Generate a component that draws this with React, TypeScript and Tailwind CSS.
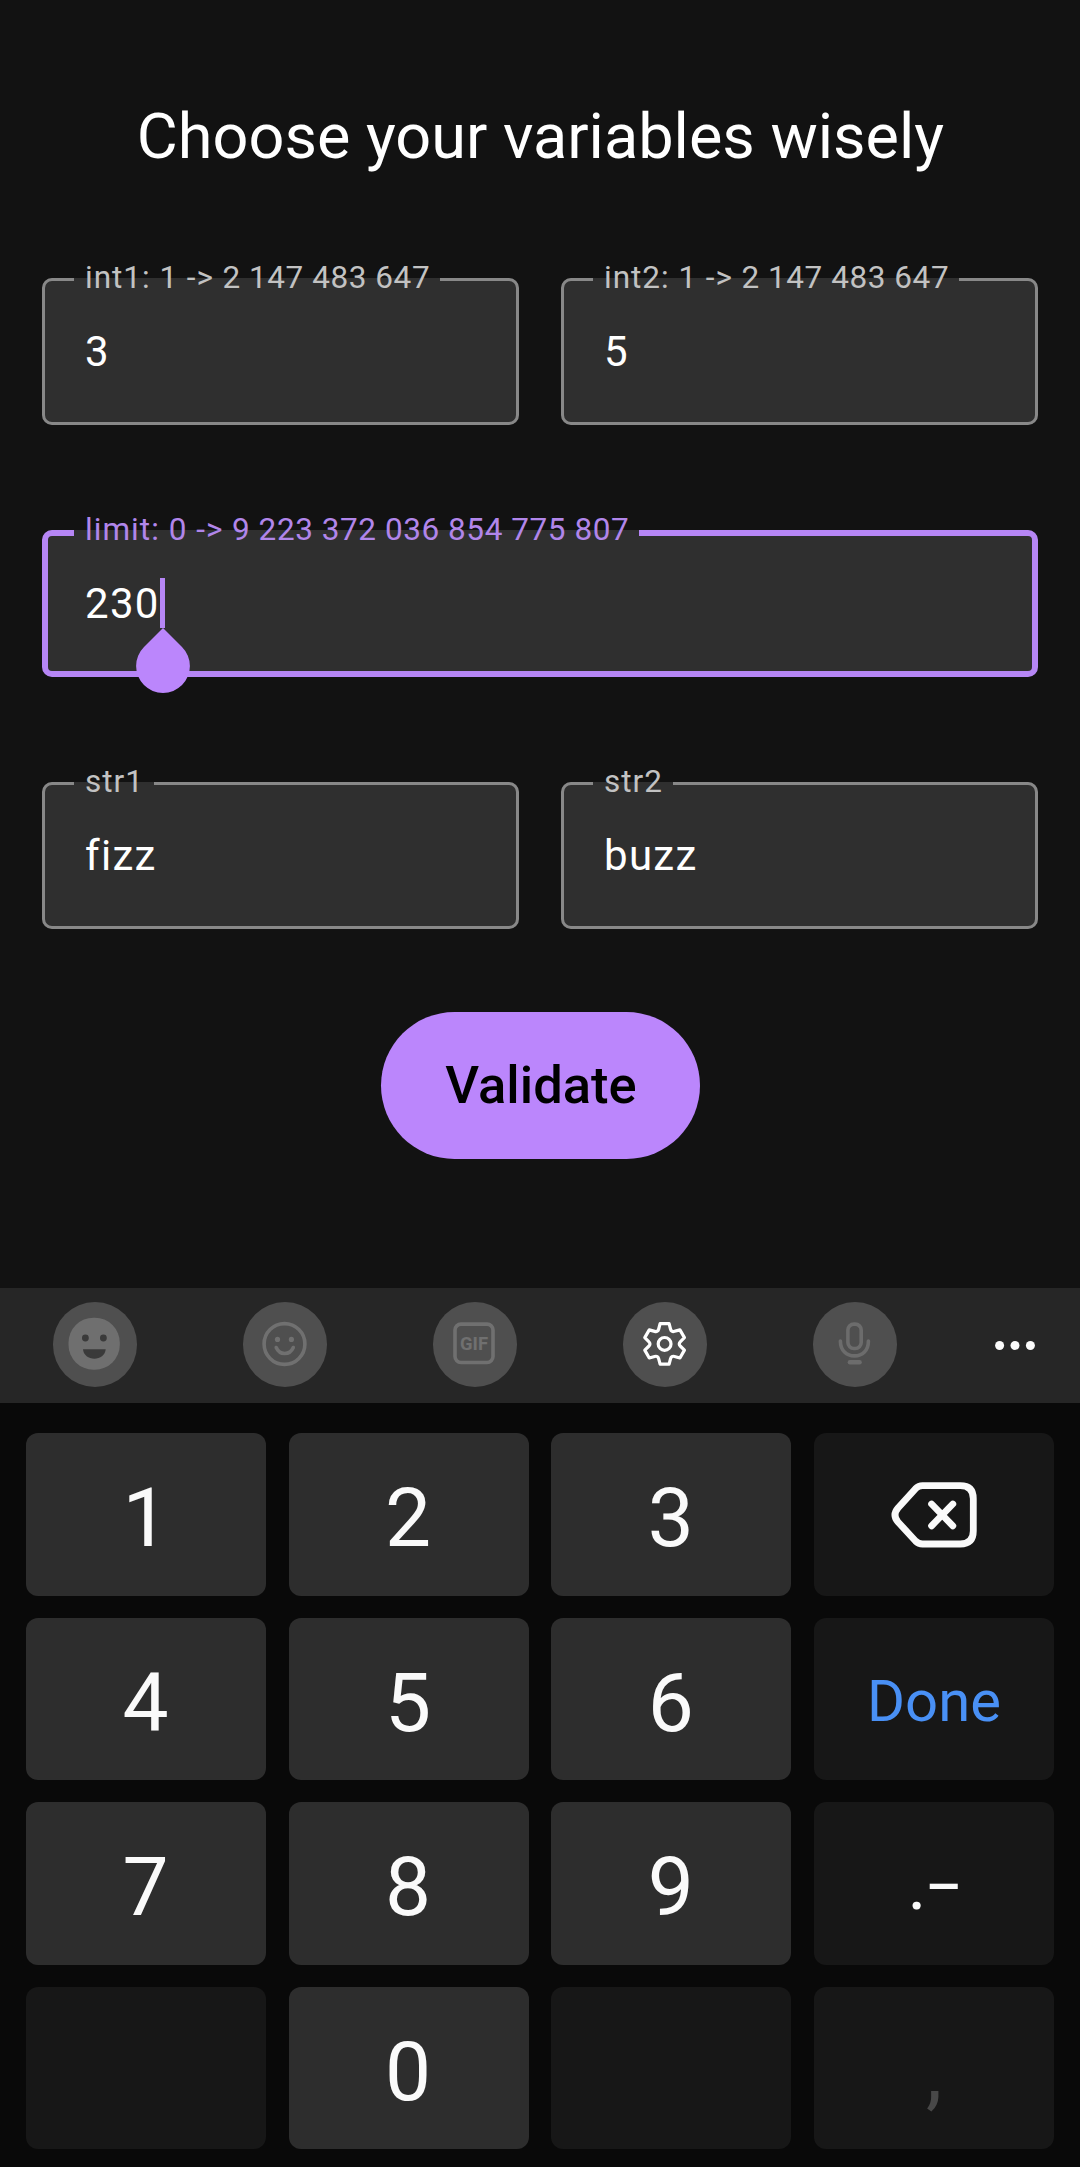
import type { ReactNode } from "react";

function Label({ name, max }: { name: string; max?: string }) {
  return (
    <>
      {name}
      {max && <span className="tracking-[0.56px]">{` ${max}`}</span>}
    </>
  );
}

function Field({ name, max, value }: { name: string; max?: string; value: string }) {
  return (
    <fieldset className="h-[147px] min-w-0 flex-1 rounded-[10px] border-[3px] border-[#888888] bg-[#2f2f2f]">
      <legend className="ml-[29px] h-0 pr-[10px] pl-[11px] text-[31.5px] leading-[0] tracking-[0.98px] whitespace-nowrap text-[#c2c2c2]">
        <span className="relative -top-[2px]">
          <Label name={name} max={max} />
        </span>
      </legend>
      <div className="flex h-full items-center pl-[40px] text-[42px] tracking-[1.3px] text-white">{value}</div>
    </fieldset>
  );
}

function FocusedField({ name, max, value }: { name: string; max?: string; value: string }) {
  return (
    <fieldset className="relative h-[147px] min-w-0 flex-1 rounded-[10px] border-[6px] border-[#b686f5] bg-[#2f2f2f]">
      <legend className="ml-[26px] h-0 pr-[10px] pl-[11px] text-[31.5px] leading-[0] tracking-[1.05px] whitespace-nowrap text-[#b186ea]">
        <span className="relative -top-[3px]">
          <Label name={name} max={max} />
        </span>
      </legend>
      <div className="flex h-full items-center pl-[37px] text-[42px] tracking-[1.3px] text-white">{value}</div>
      <span className="absolute top-[42px] left-[112px] h-[50px] w-[5px] bg-[#b686f5]" />
      <svg className="absolute top-[92px] left-[88px] h-[66px] w-[54px]" viewBox="0 0 54 66" fill="#bb86fc">
        <path d="M27 0 L46 19 A26.9 26.9 0 1 1 8 19 Z" />
      </svg>
    </fieldset>
  );
}

function ToolButton({ children, className }: { children: ReactNode; className: string }) {
  return (
    <button className={`h-[85px] w-[84px] shrink-0 rounded-full bg-[#4f4f4f] ${className}`}>
      <svg className="h-[85px] w-[84px]" viewBox="0 0 84 85" fill="none" strokeLinecap="round" strokeLinejoin="round">
        {children}
      </svg>
    </button>
  );
}

const gearPath = (() => {
  const at = (x: number, y: number, turn: number) => {
    const a = (turn * Math.PI) / 3;
    const px = 41.6 + x * Math.cos(a) - y * Math.sin(a);
    const py = 41.9 + x * Math.sin(a) + y * Math.cos(a);
    return `${px.toFixed(2)} ${py.toFixed(2)}`;
  };
  let d = "";
  for (let i = 0; i < 6; i++) {
    d += `${i === 0 ? "M" : "L"}${at(-5.9, -14.9, i)} L${at(-4.5, -20.3, i)} L${at(4.5, -20.3, i)} L${at(5.9, -14.9, i)} Q${at(6.7, -11.6, i)} ${at(-5.9, -14.9, i + 1)} `;
  }
  return d + "Z";
})();

function Key({ children, dark }: { children?: ReactNode; dark?: boolean }) {
  return (
    <button
      className={`flex h-[162.5px] items-center justify-center rounded-[12px] text-[82px] leading-none text-[#fafafa] ${
        dark ? "bg-[#171717]" : "bg-[#2d2d2d]"
      }`}
    >
      {children}
    </button>
  );
}

function Digit({ children }: { children: ReactNode }) {
  return (
    <Key>
      <span className="relative top-[4px] -left-[0.5px]">{children}</span>
    </Key>
  );
}

export default function App() {
  return (
    <div className="flex h-[2167px] w-[1080px] flex-col overflow-hidden bg-[#121212] font-['Roboto',sans-serif]">
      <main className="flex h-[1288px] shrink-0 flex-col px-[42px] pt-[101px]">
        <h1 className="pl-px text-center text-[63px] leading-[72px] whitespace-nowrap text-white">
          Choose your variables wisely
        </h1>
        <div className="mt-[105px] flex gap-[42px]">
          <Field name="int1: 1 ->" max="2 147 483 647" value="3" />
          <Field name="int2: 1 ->" max="2 147 483 647" value="5" />
        </div>
        <div className="mt-[105px] flex">
          <FocusedField name="limit: 0 ->" max="9 223 372 036 854 775 807" value="230" />
        </div>
        <div className="mt-[105px] flex gap-[42px]">
          <Field name="str1" value="fizz" />
          <Field name="str2" value="buzz" />
        </div>
        <button className="mt-[83px] h-[147px] w-[319px] self-center rounded-full bg-[#bb86fc] pl-[2px] text-[52.5px] font-medium text-black">
          Validate
        </button>
      </main>

      <section className="shrink-0 bg-[#090909]">
        <div className="flex h-[115px] items-center bg-[#262626] pb-[2px] pl-[53px]">
          <ToolButton className="mr-[106px]">
            <rect x="15.5" y="15.7" width="51.3" height="52" rx="25" fill="#6f6f6f" />
            <circle cx="32.4" cy="36" r="3.4" fill="#3a3a3a" />
            <circle cx="50.4" cy="36" r="3.4" fill="#3a3a3a" />
            <path d="M30 47.2 H52.7 C52.3 53 47 56.7 41.3 56.7 S30.4 53 30 47.2 Z" fill="#3a3a3a" />
          </ToolButton>
          <ToolButton className="mr-[106px]">
            <g stroke="#707070" strokeWidth="3.6">
              <circle cx="41.5" cy="42" r="20.4" />
              <path d="M33.2 45.5 C35 49.6 38 51.5 41.7 51.5 S48.5 49.6 50.3 45.5" />
            </g>
            <circle cx="34.5" cy="37.4" r="2.6" fill="#707070" />
            <circle cx="48.4" cy="37.4" r="2.6" fill="#707070" />
          </ToolButton>
          <ToolButton className="mr-[106px]">
            <rect x="22" y="22.1" width="38" height="38.4" rx="6" stroke="#707070" strokeWidth="3.6" />
            <text
              x="41"
              y="48.2"
              textAnchor="middle"
              fontSize="19"
              fontWeight="700"
              fill="#707070"
              textLength="28"
              lengthAdjust="spacingAndGlyphs"
            >
              GIF
            </text>
          </ToolButton>
          <ToolButton className="mr-[106px]">
            <g stroke="#ffffff" strokeWidth="3.2">
              <path d={gearPath} />
              <circle cx="41.6" cy="41.9" r="6.4" />
            </g>
          </ToolButton>
          <ToolButton className="mr-[98px]">
            <g stroke="#6c6c6c" strokeWidth="3.6">
              <rect x="34.9" y="22.1" width="13.3" height="24.4" rx="6" />
              <path d="M27.4 39 C27.4 48.5 33.5 53.9 41.5 53.9 S55.4 48.5 55.4 39" />
              <path d="M36.9 60.3 H46.6" strokeWidth="4.4" />
            </g>
          </ToolButton>
          <svg className="h-[12px] w-[44px]" viewBox="0 0 44 12" fill="#fafafa">
            <circle cx="4.6" cy="6.5" r="4.5" />
            <circle cx="20" cy="6.5" r="4.5" />
            <circle cx="35.4" cy="6.5" r="4.5" />
          </svg>
        </div>

        <div className="grid grid-cols-[repeat(4,240px)] justify-between gap-y-[22px] px-[26px] pt-[30px] pb-[18px]">
          <Digit>1</Digit>
          <Digit>2</Digit>
          <Digit>3</Digit>
          <Key dark>
            <svg
              className="relative top-px h-[70px] w-[88px]"
              viewBox="0 0 88 70"
              fill="none"
              stroke="#fafafa"
              strokeWidth="6.8"
              strokeLinecap="round"
              strokeLinejoin="round"
            >
              <path d="M32.5 5.7 H70.3 Q83.3 5.7 83.3 18.7 V51 Q83.3 64 70.3 64 H32.5 Q28.5 64 25.5 61 L8 42 Q2 35 8 28 L25.5 8.7 Q28.5 5.7 32.5 5.7 Z" />
              <path d="M41.6 24 L62.8 45.8 M62.8 24 L41.6 45.8" />
            </svg>
          </Key>
          <Digit>4</Digit>
          <Digit>5</Digit>
          <Digit>6</Digit>
          <Key dark>
            <span className="relative top-[2px] text-[58px] text-[#4990f5]">Done</span>
          </Key>
          <Digit>7</Digit>
          <Digit>8</Digit>
          <Digit>9</Digit>
          <Key dark>
            <span className="relative top-[2px] flex items-baseline">
              <span className="relative left-px text-[72px]">.</span>
              <span className="relative -top-[3px] text-[56px] font-medium">–</span>
            </span>
          </Key>
          <Key dark />
          <Digit>0</Digit>
          <Key dark />
          <Key dark>
            <span className="relative top-[4px] text-[#484848]">,</span>
          </Key>
        </div>
      </section>
    </div>
  );
}
